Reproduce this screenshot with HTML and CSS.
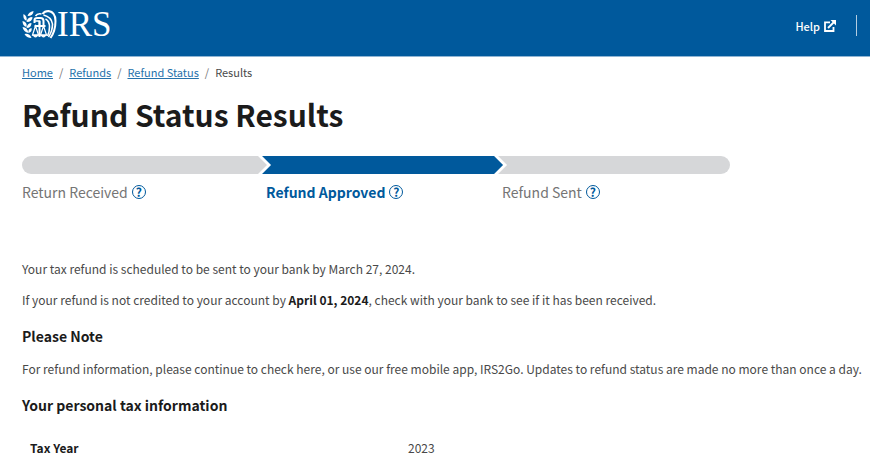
FILE: index.html
```html
<!DOCTYPE html>
<html lang="en">
<head>
    <meta charset="UTF-8">
    <meta name="viewport" content="width=device-width, initial-scale=1.0">
    <title>Refund Status Results</title>
    <link rel="stylesheet" href="styles.css">
</head>
<body>
    <header class="header">
        <a class="logo" href="#" aria-label="IRS home">
            <svg class="logo-eagle" viewBox="0 0 34 30" fill="none" stroke="#fff" aria-hidden="true">
                <!-- olive branch -->
                <g fill="#fff" stroke="none">
                    <path d="M5 6Q6 2 11 1Q11 6 5 6Z"/>
                    <path d="M1 4Q5 6 4 11Q0 9 1 4Z"/>
                    <path d="M4 12Q5 7 10 7Q10 12 4 12Z"/>
                    <path d="M0 11Q5 12 4 17Q0 16 0 11Z"/>
                    <path d="M4 18Q5 13 9 13Q9 18 4 18Z"/>
                    <path d="M0 17Q5 17 6 23Q1 22 0 17Z"/>
                    <path d="M6 23Q5 19 9 18Q10 22 6 23Z"/>
                    <path d="M2 24Q7 23 9 28Q4 28 2 24Z"/>
                </g>
                <!-- eagle head and body -->
                <path d="M12 13V10Q12 8 15 8H18Q21 8 21 11V15" stroke-width="2"/>
                <path d="M12 11H17V15" stroke-width="1.6"/>
                <path d="M13 6Q15 3 19 4" stroke-width="1.6"/>
                <!-- wing -->
                <path d="M20 4Q22 1 26 1Q33 2 33 11Q33 21 28 28" stroke-width="2"/>
                <path d="M21 5Q29 7 30 14Q30 21 26 27" stroke-width="1.6"/>
                <path d="M23 9Q27 11 27 17Q27 22 25 26" stroke-width="1.6"/>
                <!-- scales -->
                <path d="M12 16H23M17 11V27" stroke-width="2"/>
                <path d="M13 16L10 25H16ZM21 16L18 25H24Z" stroke-width="1.2"/>
                <path d="M10 25Q13 29 16 25ZM18 25Q21 29 24 25Z" fill="#fff"/>
            </svg>
            <span class="logo-text">IRS</span>
        </a>
        <nav class="header-nav">
            <a class="help-link" href="#">Help
                <svg class="external-icon" viewBox="0 0 12 12" fill="none" stroke="#fff" stroke-width="1.8" aria-hidden="true">
                    <path d="M6 2.3H1V11H9.5V7"/>
                    <path d="M4 8L10 2"/>
                    <path d="M6.5 0H12V5.5Z" fill="#fff" stroke="none"/>
                </svg>
            </a>
        </nav>
    </header>

    <main class="content">
        <nav aria-label="Breadcrumb">
            <ol class="breadcrumb">
                <li><a href="#">Home</a></li>
                <li><a href="#">Refunds</a></li>
                <li><a href="#">Refund Status</a></li>
                <li>Results</li>
            </ol>
        </nav>

        <h1>Refund Status Results</h1>

        <ol class="progress">
            <li class="step">
                <div class="bar bar-first"></div>
                <div class="label">Return Received <button class="tip" type="button" aria-label="About Return Received">?</button></div>
            </li>
            <li class="step step-active" aria-current="step">
                <div class="bar bar-middle"></div>
                <div class="label">Refund Approved <button class="tip" type="button" aria-label="About Refund Approved">?</button></div>
            </li>
            <li class="step">
                <div class="bar bar-last"></div>
                <div class="label">Refund Sent <button class="tip" type="button" aria-label="About Refund Sent">?</button></div>
            </li>
        </ol>

        <p>Your tax refund is scheduled to be sent to your bank by March 27, 2024.</p>
        <p>If your refund is not credited to your account by <strong>April 01, 2024</strong>, check with your bank to see if it has been received.</p>

        <h2>Please Note</h2>
        <p>For refund information, please continue to check here, or use our free mobile app, IRS2Go. Updates to refund status are made no more than once a day.</p>

        <h2>Your personal tax information</h2>
        <table class="tax-info">
            <tr>
                <th scope="row">Tax Year</th>
                <td>2023</td>
            </tr>
        </table>
    </main>
</body>
</html>
```
FILE: styles.css
```css
* {
    box-sizing: border-box;
}

body {
    margin: 0;
    background-color: #fff;
    color: #494949;
    font-family: "Source Sans Pro", "Noto Sans CJK SC", sans-serif;
    font-size: 12px;
    line-height: 19px;
}

a {
    color: #00599c;
}

/* Header */
.header {
    display: flex;
    align-items: center;
    justify-content: space-between;
    padding: 5px 13px 11px 22px;
    background-color: #00599c;
    border-bottom: 1px solid #8fb5d4;
}

.logo {
    display: flex;
    align-items: center;
    color: #fff;
    text-decoration: none;
}

.logo-eagle {
    width: 35px;
    height: 30px;
}

.logo-text {
    font-family: "Liberation Serif", serif;
    font-size: 35px;
    line-height: 40px;
}

.header-nav {
    padding-right: 20px;
    border-right: 1px solid #b3cde1;
}

.help-link {
    display: flex;
    align-items: center;
    gap: 4px;
    padding-top: 2px;
    color: #fff;
    font-size: 11px;
    font-weight: 500;
    text-decoration: none;
}

.external-icon {
    width: 12px;
    height: 12px;
}

/* Page content */
.content {
    padding: 6px 0 0 22px;
}

.breadcrumb {
    display: flex;
    margin: 0;
    padding: 0;
    list-style: none;
    font-size: 11px;
}

.breadcrumb li + li::before {
    content: "/";
    padding: 0 6px;
    color: #757575;
}

.breadcrumb a {
    color: #2672ab;
}

h1 {
    margin: 8px 0 18px;
    color: #1b1b1b;
    font-size: 30px;
    line-height: 48px;
}

h2 {
    margin: 16px 0 12px;
    color: #1b1b1b;
    font-size: 14px;
    line-height: 22px;
}

p {
    margin: 0 0 12px;
}

strong {
    color: #1b1b1b;
}

/* Refund progress */
.progress {
    display: grid;
    grid-template-columns: repeat(3, 1fr);
    width: 83.5%;
    margin: 0 0 56px;
    padding: 0;
    list-style: none;
}

.bar {
    height: 18px;
    background-color: #d6d7d9;
}

.bar-first {
    margin-right: -9px;
    border-radius: 9px 0 0 9px;
    clip-path: polygon(0 0, calc(100% - 9px) 0, 100% 50%, calc(100% - 9px) 100%, 0 100%);
}

.bar-middle {
    margin: 0 -9px 0 4px;
    background-color: #00599c;
    clip-path: polygon(0 0, calc(100% - 9px) 0, 100% 50%, calc(100% - 9px) 100%, 0 100%, 9px 50%);
}

.bar-last {
    margin-left: 4px;
    border-radius: 0 9px 9px 0;
    clip-path: polygon(0 0, 100% 0, 100% 100%, 0 100%, 9px 50%);
}

.label {
    display: flex;
    align-items: center;
    gap: 4px;
    padding-top: 7px;
    color: #757575;
    font-size: 14px;
    line-height: 22px;
}

.step + .step .label {
    padding-left: 8px;
}

.step-active .label {
    color: #00599c;
    font-weight: bold;
}

.tip {
    width: 14px;
    height: 14px;
    padding: 0;
    border: 1px solid #00599c;
    border-radius: 50%;
    background: none;
    color: #00599c;
    font-family: inherit;
    font-size: 12px;
    font-weight: bold;
    line-height: 12px;
    cursor: pointer;
}

/* Tax information table */
.tax-info {
    width: 100%;
    margin-top: 18px;
    border-collapse: collapse;
}

.tax-info th,
.tax-info td {
    padding: 4px 8px;
    text-align: left;
}

.tax-info th {
    width: 378px;
    color: #1b1b1b;
}
```
